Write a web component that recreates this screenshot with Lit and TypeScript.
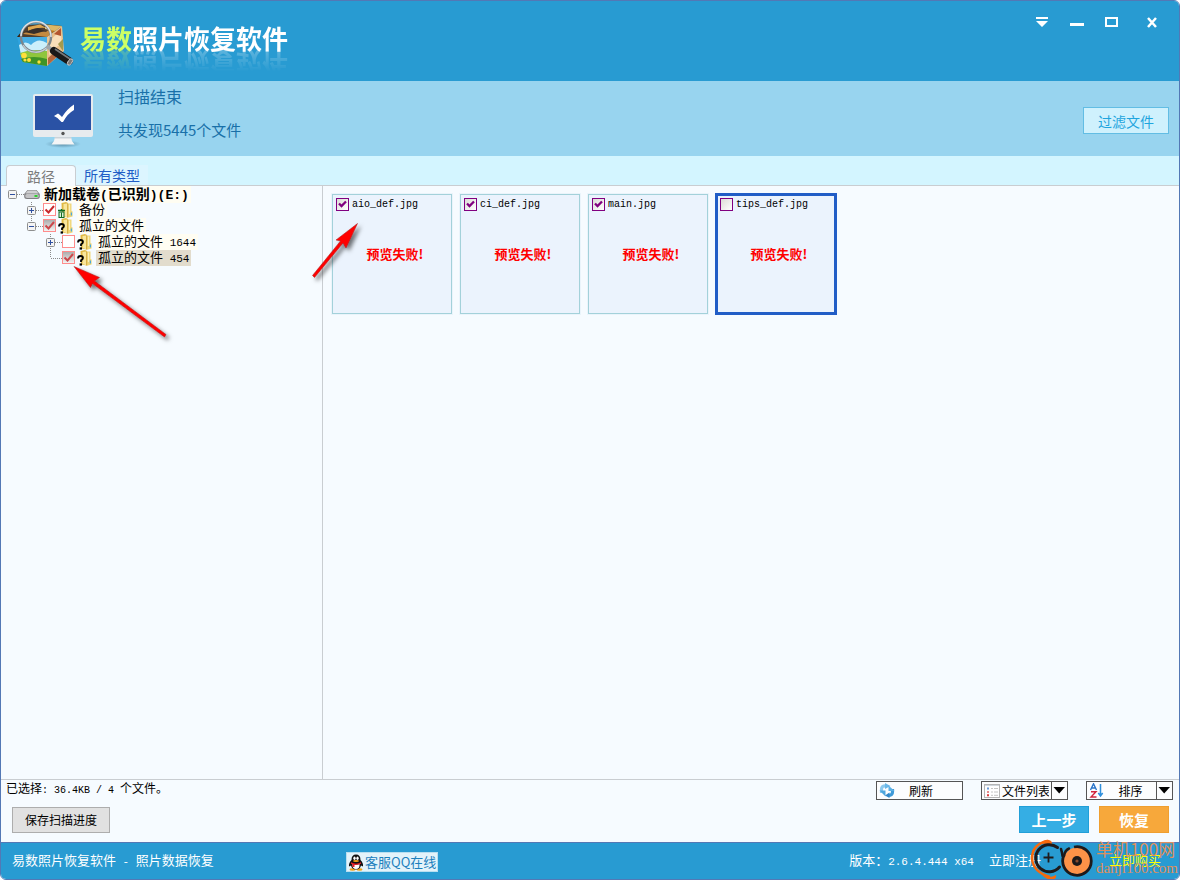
import { LitElement, html, css, svg, nothing } from "lit";
import { customElement, property, state } from "lit/decorators.js";
import { classMap } from "lit/directives/class-map.js";

const FONT = css`"Liberation Mono", "Noto Sans CJK SC", monospace`;
const SANS = css`"Noto Sans CJK SC", sans-serif`;

interface TreeNode {
  id: string;
  level: number;
  label: string;
  count?: string;
  expander?: "plus" | "minus";
  last?: boolean;
  icon: "drive" | "trash" | "unknown";
  check?: "on" | "off" | "partial";
  selected?: boolean;
}

const NODES: TreeNode[] = [
  { id: "e", level: 0, label: "新加载卷(已识别)(E:)", expander: "minus", icon: "drive" },
  { id: "backup", level: 1, label: "备份", expander: "plus", icon: "trash", check: "on" },
  { id: "orphan", level: 1, label: "孤立的文件", expander: "minus", last: true, icon: "unknown", check: "partial" },
  { id: "o1", level: 2, label: "孤立的文件", count: "1644", expander: "plus", icon: "unknown", check: "off" },
  { id: "o2", level: 2, label: "孤立的文件", count: "454", last: true, icon: "unknown", check: "partial", selected: true },
];

@customElement("path-tree")
export class PathTree extends LitElement {
  static styles = css`
    :host { display: block; font: 13px/14px ${FONT}; color: #000; }
    .tree { list-style: none; margin: 0; padding: 0 0 0 7px; }
    .row { display: flex; align-items: flex-start; height: 16px; }
    .level1 { padding-left: 19px; }
    .level2 { padding-left: 38px; }
    .gutter, .icon { flex: none; display: block; }
    .icon { margin: 0 4px 0 1px; }
    .drive { margin: 0 2px 0 0; }
    .box {
      appearance: none; flex: none; width: 13px; height: 13px; margin: 1px 0 0;
      border: 1px solid #ff8c8c; background: #fff no-repeat center;
    }
    .box:checked {
      background-image: url("data:image/svg+xml,%3Csvg xmlns='http://www.w3.org/2000/svg' width='11' height='11'%3E%3Cpath d='M1.5 5.5L4.5 8.5L10 2' fill='none' stroke='%23c8282c' stroke-width='2'/%3E%3C/svg%3E");
    }
    .partial:checked {
      background-image: url("data:image/svg+xml,%3Csvg xmlns='http://www.w3.org/2000/svg' width='11' height='11'%3E%3Cpath d='M1.5 5.5L4.5 8.5L10 2' fill='none' stroke='%23cb474b' stroke-width='2'/%3E%3C/svg%3E"),
        linear-gradient(#adadad, #f4f4f4);
    }
    .label { padding: 2px 2px 0; background: #fffdf2; white-space: pre; }
    .selected { background: #e2dccd; }
    .root { font-weight: 700; font-size: 14px; }
    .count { font-size: 11px; }
    .root .count { font-size: 13px; }
  `;

  private gutter(n: TreeNode) {
    const up = n.level > 0;
    const down = n.level > 0 && !n.last;
    return html`<svg class="gutter" width="16" height="16" viewBox="0 0 16 16" aria-hidden="true">
      <g stroke="#8a8a8a" stroke-dasharray="1 1" fill="none">
        ${up ? svg`<path d="M4.500 0V8"/>` : nothing}
        ${down ? svg`<path d="M4.500 8V16"/>` : nothing}
        <path d="M5 8.500H16"/>
      </g>
      ${n.expander
        ? svg`<rect x=".5" y="4.500" width="8" height="8" rx="1" fill="#f4f4f4" stroke="#8e8f8f"/>
          <path d="${n.expander === "plus" ? "M2 8.500H7M4.500 6V11" : "M2 8.500H7"}" stroke="#2e4fa0"/>`
        : nothing}
    </svg>`;
  }

  private icon(n: TreeNode) {
    if (n.icon === "drive") {
      return html`<svg class="icon drive" width="16" height="16" viewBox="0 0 16 16" aria-hidden="true">
        <path d="M3.500 4H12.500L15.800 8V10.500Q15.800 13 13 13H3Q.2 13 .2 10.500V8Z" fill="#7f7f82"/>
        <path d="M3.800 4.600H12.200L14.600 7.600H1.400Z" fill="#cfcfd1"/>
        <rect x="1.200" y="8" width="13.600" height="4" rx="1.900" fill="#c4c4c6"/>
        <rect x="10.500" y="9" width="3" height="2" fill="#2fd02f"/>
      </svg>`;
    }
    return html`<svg class="icon" width="16" height="16" viewBox="0 0 16 16" aria-hidden="true">
      <path d="M4.500 1L9 0L11 1V15.500L5 14.500Z" fill="#e0b944"/>
      <path d="M10 1.500H14.500V9L15.600 9.500V14.500L11 15.800Z" fill="#f0d678"/>
      <path d="M6.500 2L10.500 1.500V15.500L6.500 14Z" fill="#f8e69c"/>
      <path d="M10.700 1.500V15.500" stroke="#c99c2c" stroke-width=".8"/>
      <path d="M12.500 2.500V12" stroke="#fbf0bb" stroke-width="1.200"/>
      <path d="M14.400 10.500V13.500" stroke="#48a9de" stroke-width="1.200"/>
      ${n.icon === "trash"
        ? svg`<path d="M1 8.500H8M4.500 7V8" stroke="#0f6b22" stroke-width="1.300"/>
          <rect x="2" y="10" width="5" height="5.500" fill="#dff0d8" stroke="#0f6b22"/>
          <path d="M4.500 10.500V15" stroke="#0f6b22"/>`
        : svg`<path d="M2 8.500Q2 6 4.500 6Q7 6 7 8Q7 9.500 5 10.300V12" fill="none" stroke="#000" stroke-width="1.800"/>
          <rect x="3.600" y="13.400" width="2.400" height="2.200"/>`}
    </svg>`;
  }

  render() {
    return html`<ul class="tree" role="tree">
      ${NODES.map(
        (n) => html`<li class="row level${n.level}" role="treeitem">
          ${this.gutter(n)}
          ${n.check
            ? html`<input id=${n.id} type="checkbox" class=${classMap({ box: true, partial: n.check === "partial" })}
                ?checked=${n.check !== "off"} />`
            : nothing}
          ${this.icon(n)}
          ${n.level === 0
            ? html`<span class="label root">新加载卷<span class="count">(</span>已识别<span class="count">)(E:)</span></span>`
            : html`<label for=${n.id} class=${classMap({ label: true, selected: !!n.selected })}
                >${n.label}${n.count ? html`<span class="count"> ${n.count}</span>` : nothing}</label>`}
        </li>`
      )}
    </ul>`;
  }
}

@customElement("file-card")
export class FileCard extends LitElement {
  @property() name = "";
  @property({ type: Boolean }) checked = false;
  @property({ type: Boolean, reflect: true }) current = false;

  static styles = css`
    :host {
      display: flex; flex-direction: column; box-sizing: border-box; width: 120px; height: 120px;
      padding: 3px; border: 1px solid #a3d1da; background: #ebf3fd; box-shadow: 0 0 0 1px #eaf4fb;
    }
    :host([current]) { outline: 3px solid #215dc6; outline-offset: -2px; }
    .head { display: flex; align-items: center; gap: 3px; font: 10px/13px ${FONT}; color: #000; }
    .box {
      appearance: none; flex: none; width: 13px; height: 13px; margin: 0;
      border: 1px solid #800080; background: linear-gradient(135deg, #dcdcd6, #fff) no-repeat center;
    }
    .box:checked {
      background-image: url("data:image/svg+xml,%3Csvg xmlns='http://www.w3.org/2000/svg' width='11' height='11'%3E%3Cpath d='M2 4.500L4.500 7L9 2.500' fill='none' stroke='%23800080' stroke-width='2.300'/%3E%3C/svg%3E"),
        linear-gradient(135deg, #dcdcd6, #fff);
    }
    .fail {
      flex: 1; display: flex; justify-content: center; margin: 0; padding: 35px 0 0 6px;
      font: 700 13px/16px ${SANS}; color: #f00;
    }
  `;

  render() {
    return html`<label class="head"><input class="box" type="checkbox" ?checked=${this.checked} />${this.name}</label>
      <p class="fail">预览失败!</p>`;
  }
}

@customElement("app-root")
export class AppRoot extends LitElement {
  @state() private tab = 0;

  static styles = css`
    :host {
      display: flex; flex-direction: column; position: relative; box-sizing: border-box; min-height: 100vh;
      border: 1px solid #5378b5; border-radius: 6px; overflow: hidden; background: #f6fbff;
      font: 13px/16px ${FONT}; color: #000;
    }
    button, select { font: inherit; color: inherit; margin: 0; cursor: pointer; box-sizing: border-box; }
    a { color: inherit; text-decoration: none; }
    .title { display: flex; align-items: flex-start; height: 80px; background: #289bd2; }
    .logo { flex: none; margin: 18px 4px 0 15px; }
    .name {
      flex: 1; margin: 0; padding-top: 21px; font: 700 26px/32px ${SANS}; color: #fff;
    }
    .brand {
      display: inline-block; white-space: nowrap;
      -webkit-box-reflect: below -8px linear-gradient(transparent 20%, rgba(0, 0, 0, 0.3));
    }
    .lime { color: #ccff66; }
    .controls { display: flex; padding: 10px 10px 0 0; }
    .ctl { width: 35px; height: 22px; padding: 0; border: 0; background: none; display: grid; place-items: center; }
    .close { margin-left: 5px; }
    .banner { display: flex; align-items: center; height: 75px; padding: 0 10px 0 31px; background: #98d4ef; }
    .monitor { padding-top: 4px; }
    .summary { flex: 1; margin-left: 24px; color: #1970a8; font-family: ${SANS}; align-self: flex-start; padding-top: 5px; }
    .summary p { margin: 0 0 15px; }
    .done { font-size: 16px; line-height: 20px; }
    .found { font-size: 15px; line-height: 18px; }
    .filter { height: 27px; margin-top: 4px; padding: 0 14px; border: 1px solid #62bde4; background: #cff1fd; color: #1fa5de; font: 14px/20px ${SANS}; }
    .tabs { display: flex; align-items: flex-end; height: 29px; padding-left: 5px; background: #d3f5ff; border-bottom: 1px solid #c9cdd1; }
    .tab { height: 20px; padding: 0 8px; border: 0; background: #dcf5ff; color: #215dc6; font: 14px/18px ${SANS}; }
    .tab.active {
      height: 21px; margin-bottom: -1px; padding: 0 20px; border: 1px solid #c9cdd1; border-bottom: 0;
      border-radius: 4px 4px 0 0; background: #f6fbff; color: #7c7c7c;
    }
    .body { flex: 1; display: grid; grid-template-columns: 322px 1fr; }
    .side { border-right: 1px solid #c9cdd1; }
    .files { display: flex; flex-wrap: wrap; align-content: flex-start; gap: 8px; padding: 8px 9px; }
    .tools { display: flex; justify-content: space-between; height: 62px; border-top: 1px solid #c9cdd1; font-size: 12px; }
    .left { padding: 2px 0 0 5px; }
    .left p { margin: 0 0 8px; }
    .small { font-size: 10px; }
    .save { height: 26px; margin-left: 6px; padding: 0 12px; border: 1px solid #adadad; background: #e1e1e1; font: 12px/16px ${SANS}; }
    .right { padding-right: 6px; }
    .line { display: flex; gap: 18px; padding-top: 1px; }
    .combo {
      display: flex; align-items: center; gap: 2px; box-sizing: border-box; width: 87px; height: 19px; padding: 0 0 0 2px;
      border: 1px solid #555; background: #fcfdfe; font: 12px/16px ${SANS};
    }
    .combo svg { flex: none; }
    .caption { flex: 1; text-align: center; padding-right: 17px; }
    .pick {
      appearance: none; flex: 1; min-width: 0; height: 17px; padding: 0 18px 0 0; border: 0; text-align: center; text-align-last: center; text-overflow: clip;
      background: url("data:image/svg+xml,%3Csvg xmlns='http://www.w3.org/2000/svg' width='16' height='17'%3E%3Cpath d='M.5 0V17' stroke='%23555'/%3E%3Cpath d='M2.500 5H14L8.200 11.500Z'/%3E%3C/svg%3E") no-repeat right center;
    }
    .steps { display: flex; justify-content: flex-end; gap: 10px; padding: 6px 4px 0 0; }
    .step { width: 70px; height: 27px; padding: 0; border: 1px solid #219fd8; background: #35aee4; color: #fff; font: 700 15px/20px ${SANS}; }
    .recover { border-color: #ef9f30; background: #f7a83b; }
    .foot {
      display: grid; grid-template-columns: 334px 1fr auto; align-items: center; height: 34px; padding: 2px 18px 0 11px;
      border-top: 1px solid #5378b5; background: #289bd2; color: #fff; box-sizing: content-box;
    }
    .qq {
      justify-self: start; display: flex; align-items: center; gap: 1px; height: 18px; padding: 0 1px;
      border: 1px solid #b9dff0; background: #e3f3fa; color: #1c80bd; font: 13px/18px ${SANS};
    }
    .mono { font-size: 11px; white-space: pre; }
    .info { display: flex; gap: 15px; white-space: nowrap; }
    .buy { margin-left: 53px; color: #ff0; }
    .arrows { position: absolute; left: 0; top: 0; pointer-events: none; }
    .mark { position: absolute; right: 1px; bottom: 0; display: flex; pointer-events: none; color: #df8f5c; }
    .mark p { margin: 0; white-space: nowrap; }
    .site { font: 17px/20px ${SANS}; }
    .domain { font: 15px/18px "Liberation Serif", serif; }
  `;

  private logo() {
    return html`<svg class="logo" width="60" height="52" viewBox="0 0 60 52" aria-hidden="true">
      <path d="M1 18L11 6L28 5L46 7L31 18Z" fill="#3a210c"/>
      <path d="M7 15Q14 9 30 13L36 8L44 8L31 18Z" fill="#c17a22"/>
      <path d="M12 8L24 5.500L30 9Q20 8 12 12Z" fill="#e09b33"/>
      <path d="M8 13L22 9L29 12L18 15Z" fill="#1d0f06"/>
      <path d="M29 5.500L46 7L39 12L29 10Z" fill="#dcb765"/>
      <path d="M1 18L31 18V47L7 43Z" fill="#2fa3e0"/>
      <path d="M3 26Q10 21 15 26Q22 18 31 24V34L5 36Z" fill="#c9effb"/>
      <path d="M4 34Q16 29 31 32V47L7 43Z" fill="#8fc63c"/>
      <path d="M5 40Q18 36 31 40V47L7 43Z" fill="#3f9326"/>
      <g fill="#ffdf3a"><circle cx="8" cy="36.500" r="2.800"/><circle cx="13" cy="41" r="2"/><circle cx="23" cy="43" r="1.700"/><circle cx="9" cy="41" r="1.600"/></g>
      <path d="M31 18L46 7L48 32L31 47Z" fill="#e9c08b"/>
      <path d="M34 22Q42 12 45 15L46 27Q41 24 38 33L33 36Z" fill="#f9dfba"/>
      <path d="M38 15L45 9V17Z" fill="#b3552f"/><path d="M32 39L39 33L43 36L32 46Z" fill="#b4673d"/>
      <path d="M42 25L47 20V32Z" fill="#a39a4c"/>
      <circle cx="20" cy="18" r="15" fill="#d9f1fd" fill-opacity=".14"/>
      <circle cx="20" cy="18" r="15" fill="none" stroke="#7b868d" stroke-width="2.400"/>
      <path d="M5 17A15 15 0 0 1 35 18" fill="none" stroke="#dfe2e5" stroke-width="1.500"/>
      <path d="M7 26A15 15 0 0 0 32 27" fill="none" stroke="#c8ced2" stroke-width="1.300"/>
      <path d="M31 27L37 32" stroke="#a0a6aa" stroke-width="4"/>
      <path d="M38 32L53 42" stroke="#191919" stroke-width="8" stroke-linecap="round"/>
      <path d="M39 30L54 40" stroke="#77797b" stroke-width="1.700"/>
      <ellipse cx="54" cy="43" rx="2" ry="3.600" transform="rotate(35 54 43)" fill="#787878" stroke="#ddd" stroke-width=".8"/>
    </svg>`;
  }

  private monitor() {
    return html`<svg class="monitor" width="62" height="56" viewBox="0 0 62 56" aria-hidden="true">
      <defs><radialGradient id="sh"><stop offset="0" stop-color="#3f6f88" stop-opacity=".7"/><stop offset="1" stop-color="#3f6f88" stop-opacity="0"/></radialGradient></defs>
      <ellipse cx="31" cy="51" rx="18" ry="4" fill="url(#sh)"/>
      <rect x="1" y="1" width="60" height="43" rx="2" fill="#e7ebee"/>
      <path d="M3 3H59V37H3Z" fill="#2a52a5"/>
      <circle cx="31" cy="40.500" r="1.700" fill="#555"/>
      <path d="M23 44H39L40 48L42.500 51.500H19.500L22 48Z" fill="#f4f5f6"/><path d="M23 44H39L39.500 45.500H22.500Z" fill="#ccd3d8"/>
      <path d="M22 23L26 20.500Q28 21.500 30 24Q35 16 42 11.500V17Q36 20 31 29H29.500Q26 24.500 22 23Z" fill="#fff"/>
    </svg>`;
  }

  private arrows() {
    return html`<svg class="arrows" width="400" height="350" viewBox="1 1 400 350" aria-hidden="true">
      <defs><filter id="ds" x="-20%" y="-20%" width="150%" height="150%"><feDropShadow dx="3" dy="3" stdDeviation="2" flood-color="#000" flood-opacity=".55"/></filter></defs>
      <g fill="#ff0505" stroke="#a01818" stroke-width=".5" filter="url(#ds)">
        <path d="M74 266.500L99.500 277.500L94.500 281L166 334.500L164.500 337L92.500 283.500L90.500 287.500Z"/>
        <path d="M357.500 223.500L346 248L343 243L314.500 277.500L312.500 275.500L340.500 241L336 240Z"/>
      </g>
    </svg>`;
  }

  private watermark() {
    return html`<div class="mark">
      <svg width="66" height="40" viewBox="0 0 66 40" aria-hidden="true">
        <path d="M18 2Q2 5 2 19.500Q3 33 20 38" fill="none" stroke="#f7690c" stroke-width="2.500"/>
        <path d="M10 5Q14 0 19 1Q23 2 21.500 6Q16 4 10 5Z" fill="#f7690c"/>
        <path d="M12 36Q19 40 26 36Q27 41 20 40.500Q15 40 12 36Z" fill="#f7690c"/>
        <path d="M27.500 8.500A13.500 13.500 0 1 0 29.500 28" fill="none" stroke="#1e1a1b" stroke-width="3" stroke-linecap="round"/>
        <path d="M31 10Q32 13 32.500 17" fill="none" stroke="#1e1a1b" stroke-width="2.500" stroke-linecap="round"/>
        <path d="M13.500 18.500H23.500M18.500 13.500V23.500" stroke="#1e1a1b" stroke-width="1.800"/>
        <circle cx="47" cy="22" r="13.500" fill="#fd9248"/>
        <path d="M44 8A14.300 14.300 0 1 1 34 16" fill="none" stroke="#1e1a1b" stroke-width="2.800"/>
        <path d="M34 17Q35 11 39 9.500" fill="none" stroke="#1e1a1b" stroke-width="2.500" stroke-linecap="round"/>
        <circle cx="47" cy="22" r="5" fill="#1e1a1b"/><circle cx="47" cy="22" r="1.600" fill="#8a4a2c"/>
      </svg>
      <div><p class="site">单机100网</p><p class="domain">danji100.com</p></div>
    </div>`;
  }

  render() {
    return html`
      <header class="title">
        ${this.logo()}
        <h1 class="name"><span class="brand"><span class="lime">易数</span>照片恢复软件</span></h1>
        <div class="controls">
          <button class="ctl" aria-label="菜单"><svg width="12" height="10" viewBox="0 0 12 10"><path d="M0 0H12V2H0ZM0 4H12L6 10Z" fill="#fff"/></svg></button>
          <button class="ctl" aria-label="最小化"><svg width="14" height="10" viewBox="0 0 14 10"><path d="M0 6H14V9H0Z" fill="#fff"/></svg></button>
          <button class="ctl" aria-label="最大化"><svg width="13" height="10" viewBox="0 0 13 10"><rect x="1" y="1" width="11" height="8" fill="none" stroke="#fff" stroke-width="2"/></svg></button>
          <button class="ctl close" aria-label="关闭"><svg width="10" height="11" viewBox="0 0 10 11"><path d="M1 1L9 10M9 1L1 10" stroke="#fff" stroke-width="2.500"/></svg></button>
        </div>
      </header>
      <section class="banner">
        ${this.monitor()}
        <div class="summary">
          <p class="done">扫描结束</p>
          <p class="found">共发现5445个文件</p>
        </div>
        <button class="filter">过滤文件</button>
      </section>
      <nav class="tabs">
        ${["路径", "所有类型"].map(
          (t, i) => html`<button class=${classMap({ tab: true, active: this.tab === i })} @click=${() => (this.tab = i)}>${t}</button>`
        )}
      </nav>
      <main class="body">
        <aside class="side"><path-tree></path-tree></aside>
        <section class="files">
          <file-card name="aio_def.jpg" checked></file-card>
          <file-card name="ci_def.jpg" checked></file-card>
          <file-card name="main.jpg" checked></file-card>
          <file-card name="tips_def.jpg" current></file-card>
        </section>
      </main>
      <section class="tools">
        <div class="left">
          <p>已选择<span class="small">: 36.4KB / 4 </span>个文件。</p>
          <button class="save">保存扫描进度</button>
        </div>
        <div class="right">
          <div class="line">
            <button class="combo"><svg width="16" height="15" viewBox="0 0 16 15" aria-hidden="true">
                <path d="M7 2.800Q2.500 2.500 2.500 6.500V10" fill="none" stroke="#8cc9ee" stroke-width="3.200"/>
                <path d="M.5 7.500H6.500V13.500Z" fill="#4ea6dd"/>
                <path d="M6 0L11.500 3L6 6Z" fill="#6bb8e8"/>
                <path d="M9 12.500Q13.500 12.500 13.500 9V6" fill="none" stroke="#3f9ad8" stroke-width="3.200"/>
                <path d="M9.500 8H15.500L9.500 2.500Z" fill="#5db0e4"/>
                <path d="M10.500 9.500L6 12.500L10.500 15Z" fill="#2f86c8"/></svg>
              <span class="caption">刷新</span></button>
            <label class="combo"><svg width="16" height="14" viewBox="0 0 16 14" aria-hidden="true">
                <rect x=".5" y=".5" width="15" height="13" fill="#fff" stroke="#b5b5b5"/><path d="M1 1.500H15" stroke="#cfd6dc"/>
                <path d="M3 4.500H5" stroke="#6a9ad8" stroke-width="2"/><path d="M3 8H5" stroke="#e58a8a" stroke-width="2"/><path d="M3 11.300H5" stroke="#e03a3a" stroke-width="2"/>
                <path d="M7 4.500H9M10 4.500H14M7 8H9M10 8H14M7 11.300H9M10 11.300H14" stroke="#c4c4c4"/></svg>
              <select class="pick" aria-label="视图"><option>文件列表</option></select></label>
            <label class="combo"><svg width="16" height="15" viewBox="0 0 16 15" aria-hidden="true">
                <path d="M1.500 7L4.500 .8L7.500 7M2.700 5H6.300" fill="none" stroke="#2a74c8" stroke-width="1.400"/>
                <path d="M2 8.700H7L2 14H7.500" fill="none" stroke="#d2263c" stroke-width="1.400"/>
                <path d="M11.500 1V12M9.300 10L11.500 13L13.700 10" fill="none" stroke="#2f8fdc" stroke-width="1.500"/></svg>
              <select class="pick" aria-label="排序方式"><option>排序</option></select></label>
          </div>
          <div class="steps">
            <button class="step">上一步</button>
            <button class="step recover">恢复</button>
          </div>
        </div>
      </section>
      <footer class="foot">
        <span>易数照片恢复软件<span class="mono"> - </span>照片数据恢复</span>
        <a class="qq" href="#"><svg width="16" height="17" viewBox="0 0 16 17" aria-hidden="true">
            <ellipse cx="4.500" cy="15.500" rx="3" ry="1.300" fill="#f5a31a"/><ellipse cx="11.500" cy="15.500" rx="3" ry="1.300" fill="#f5a31a"/>
            <path d="M8 .5Q12.500 .5 12.500 6Q15.500 9 15 12.500L13 11.500Q12 15.500 8 15.500Q4 15.500 3 11.500L1 12.500Q.5 9 3.500 6Q3.500 .5 8 .5Z" fill="#111"/>
            <path d="M4.500 10Q8 11.500 11.500 10Q12 15 8 15Q4 15 4.500 10Z" fill="#fff"/>
            <ellipse cx="6.500" cy="4.200" rx="1.200" ry="1.700" fill="#fff"/><ellipse cx="9.500" cy="4.200" rx="1.200" ry="1.700" fill="#fff"/>
            <ellipse cx="8" cy="7" rx="3" ry="1" fill="#f5a31a"/><path d="M3 8.300Q8 11 13 8.300V9.800Q10 11 6.500 11V13H4.500V10.500L3 9.800Z" fill="#e6202a"/></svg>客服QQ在线</a>
        <span class="info">
          <span>版本：<span class="mono">2.6.4.444 x64</span></span>
          <a href="#">立即注册</a>
          <a class="buy" href="#">立即购买</a>
        </span>
      </footer>
      ${this.arrows()} ${this.watermark()}
    `;
  }
}
